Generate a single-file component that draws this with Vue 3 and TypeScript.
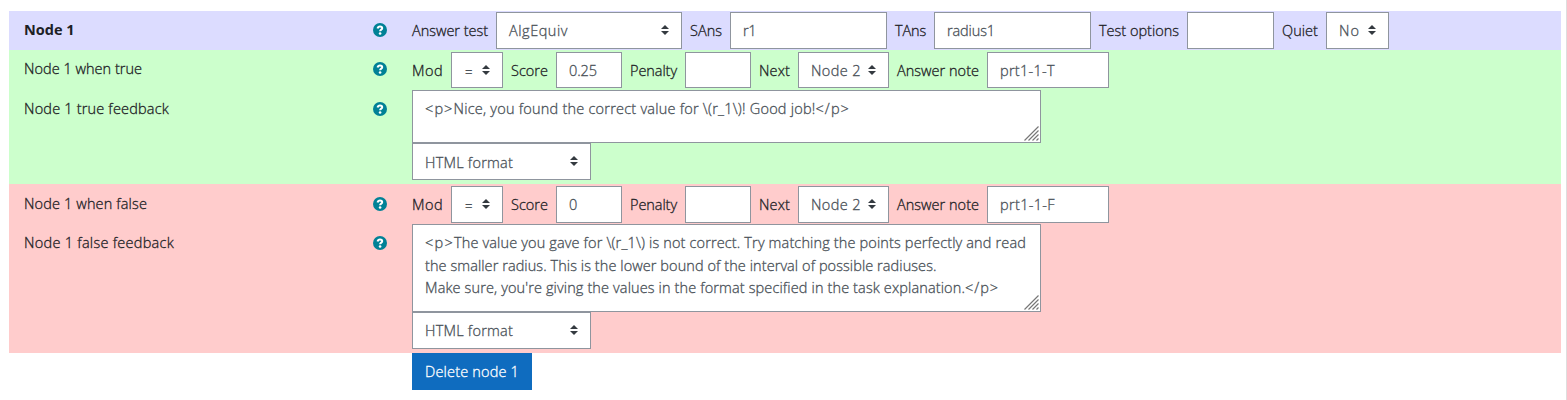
<script setup lang="ts">
interface Field {
  label: string
  labelWidth: number
  kind: 'select' | 'input'
  value: string
  valueWidth: number
  width: number
}

interface Piece {
  text: string
  width: number
}

interface Section {
  tone: string
  title: string
  titleWidth: number
  fields: Field[]
  feedback?: { title: string; titleWidth: number; lines: Piece[][] }
}

const branchFields = (score: string, scoreWidth: number, note: string, noteWidth: number): Field[] => [
  { label: 'Mod', labelWidth: 31, kind: 'select', value: '=', valueWidth: 10, width: 52 },
  { label: 'Score', labelWidth: 37, kind: 'input', value: score, valueWidth: scoreWidth, width: 66 },
  { label: 'Penalty', labelWidth: 47, kind: 'input', value: '', valueWidth: 0, width: 66 },
  { label: 'Next', labelWidth: 31, kind: 'select', value: 'Node 2', valueWidth: 50, width: 91 },
  { label: 'Answer note', labelWidth: 82, kind: 'input', value: note, valueWidth: noteWidth, width: 122 },
]

const sections: Section[] = [
  {
    tone: 'test',
    title: 'Node 1',
    titleWidth: 50.5,
    fields: [
      { label: 'Answer test', labelWidth: 76, kind: 'select', value: 'AlgEquiv', valueWidth: 59, width: 186 },
      { label: 'SAns', labelWidth: 32, kind: 'input', value: 'r1', valueWidth: 13, width: 157 },
      { label: 'TAns', labelWidth: 31, kind: 'input', value: 'radius1', valueWidth: 48, width: 157 },
      { label: 'Test options', labelWidth: 80, kind: 'input', value: '', valueWidth: 0, width: 87 },
      { label: 'Quiet', labelWidth: 36, kind: 'select', value: 'No', valueWidth: 21, width: 63 },
    ],
  },
  {
    tone: 'true',
    title: 'Node 1 when true',
    titleWidth: 118,
    fields: branchFields('0.25', 28, 'prt1-1-T', 55),
    feedback: {
      title: 'Node 1 true feedback',
      titleWidth: 145,
      lines: [
        [
          { text: '<p>', width: 28.5 },
          { text: 'Nice, you found the correct value for \\(r_1\\)! Good job!', width: 362 },
          { text: '</p>', width: 34.5 },
        ],
      ],
    },
  },
  {
    tone: 'false',
    title: 'Node 1 when false',
    titleWidth: 123,
    fields: branchFields('0', 8, 'prt1-1-F', 55),
    feedback: {
      title: 'Node 1 false feedback',
      titleWidth: 150,
      lines: [
        [
          { text: '<p>', width: 29 },
          { text: 'The value you gave for \\(r_1\\) is not correct. Try matching the points perfectly and read', width: 572 },
        ],
        [{ text: 'the smaller radius. This is the lower bound of the interval of possible radiuses.', width: 511.5 }],
        [
          { text: "Make sure, you're giving the values in the format specified in the task explanation.", width: 540 },
          { text: '</p>', width: 34 },
        ],
      ],
    },
  },
]

// Spreads a text's letters evenly so that it takes up the given width.
const vFit = {
  mounted(el: HTMLElement, binding: { value: number }) {
    const count = (el.textContent ?? '').length
    if (!count || !binding.value) return
    const natural = el.getBoundingClientRect().width
    el.style.letterSpacing = `${(binding.value - natural) / count}px`
  },
}
</script>

<template>
  <main class="page">
    <section v-for="s in sections" :key="s.tone" class="section" :class="s.tone">
      <div class="row controls-row">
        <div class="heading">
          <span v-fit="s.titleWidth" class="text">{{ s.title }}</span>
          <svg class="help" viewBox="0 0 14 14"><circle cx="7" cy="7" r="7" /><path d="M4.6 5.5C4.9 4.1 5.9 3.6 7 3.6c1.3 0 2.2.7 2.2 1.7 0 1.4-2.1 1.4-2.1 3" /><circle class="dot" cx="7.1" cy="10.5" r="1.3" /></svg>
        </div>
        <div class="fields">
          <template v-for="f in s.fields" :key="f.label">
            <span class="label" :style="{ width: f.labelWidth + 'px' }"><span v-fit="f.labelWidth" class="text">{{ f.label }}</span></span>
            <span class="box" :class="[f.kind, { sign: f.value === '=' }]" :style="{ width: f.width + 'px' }">
              <span v-fit="f.valueWidth" class="text">{{ f.value }}</span>
              <svg v-if="f.kind === 'select'" class="arrows" viewBox="0 0 8 10"><path d="M0 4 4 0l4 4zM0 6l4 4 4-4z" /></svg>
            </span>
          </template>
        </div>
      </div>
      <div v-if="s.feedback" class="row">
        <div class="heading">
          <span v-fit="s.feedback.titleWidth" class="text">{{ s.feedback.title }}</span>
          <svg class="help" viewBox="0 0 14 14"><circle cx="7" cy="7" r="7" /><path d="M4.6 5.5C4.9 4.1 5.9 3.6 7 3.6c1.3 0 2.2.7 2.2 1.7 0 1.4-2.1 1.4-2.1 3" /><circle class="dot" cx="7.1" cy="10.5" r="1.3" /></svg>
        </div>
        <div class="editor">
          <div class="area">
            <div v-for="(line, i) in s.feedback.lines" :key="i" class="line"><span v-for="p in line" :key="p.text" v-fit="p.width" class="text">{{ p.text }}</span></div>
            <svg class="grip" viewBox="0 0 15 15"><path d="M.5 14.5l14-14M4.5 14.5l10-10M8.5 14.5l6-6M12.5 14.5l2-2" /></svg>
          </div>
          <div class="box select format">
            <span v-fit="88" class="text">HTML format</span>
            <svg class="arrows" viewBox="0 0 8 10"><path d="M0 4 4 0l4 4zM0 6l4 4 4-4z" /></svg>
          </div>
        </div>
      </div>
    </section>
    <button class="delete" type="button"><span v-fit="94" class="text">Delete node 1</span></button>
  </main>
</template>

<style>
body {
  background: #fff;
  overflow: hidden;
}
</style>

<style scoped>
.page {
  box-sizing: border-box;
  width: 1567px;
  height: 400px;
  padding: 11px 5px 0 9px;
  border-right: 1px solid #dedede;
  font-family: "Open Sans", "Noto Sans", sans-serif;
  font-size: 14.5px;
  font-weight: 300;
  -webkit-text-stroke: 0.3px currentColor;
  line-height: 22px;
  color: #1d2125;
}
.text {
  display: inline-block;
  white-space: pre;
}
.section { width: 1552px; }
.test { background: #dcdcff; height: 39px; }
.true { background: #ccffcc; height: 134px; }
.false { background: #ffcccc; height: 169px; }
.row { display: flex; }
.controls-row { height: 40px; }
.test .controls-row { height: 39px; }
.heading {
  box-sizing: border-box;
  width: 403px;
  padding: 8px 25px 0 15px;
  display: flex;
  justify-content: space-between;
  align-items: flex-start;
}
.test .heading {
  font-weight: 700;
  -webkit-text-stroke: 0;
}
.help {
  width: 14px;
  height: 14px;
  margin-top: 4px;
  fill: #008196;
}
.false .controls-row .heading { padding-top: 9px; }
.help path { fill: none; stroke: #fff; stroke-width: 2; }
.help .dot { fill: #fff; }
.fields {
  display: flex;
  gap: 8px;
  padding-top: 2px;
}
.test .fields { padding-top: 1px; }
.label { flex: none; padding-top: 8px; }
.box {
  box-sizing: border-box;
  flex: none;
  height: 37px;
  padding: 7px 12px;
  border: 1px solid #8f959e;
  background: #fff;
  color: #495057;
  display: flex;
  justify-content: space-between;
  align-items: flex-start;
}
.true .fields .box { height: 36px; }
.sign { padding-left: 13px; }
.sign .text { font-size: 13px; margin-top: 1px; }
.arrows {
  flex: none;
  width: 8px;
  height: 10px;
  margin-top: 5px;
  fill: #343a40;
}
.editor { width: 629px; }
.area {
  position: relative;
  box-sizing: border-box;
  height: 53px;
  padding: 7px 12px;
  border: 1px solid #8f959e;
  background: #fff;
  color: #495057;
}
.false .area { height: 88px; }
.line { height: 22.5px; }
.grip {
  position: absolute;
  right: 1px;
  bottom: 1px;
  width: 15px;
  height: 15px;
  fill: none;
  stroke: #777;
  stroke-width: 1.2;
}
.format { width: 179px; }
.true .format .text { margin-top: 1px; }
.delete {
  display: block;
  width: 120px;
  height: 37px;
  margin: 0 0 0 403px;
  padding: 0 13px;
  border: 0;
  background: #0f6cbf;
  color: #fff;
  font: inherit;
  text-align: left;
}
</style>
